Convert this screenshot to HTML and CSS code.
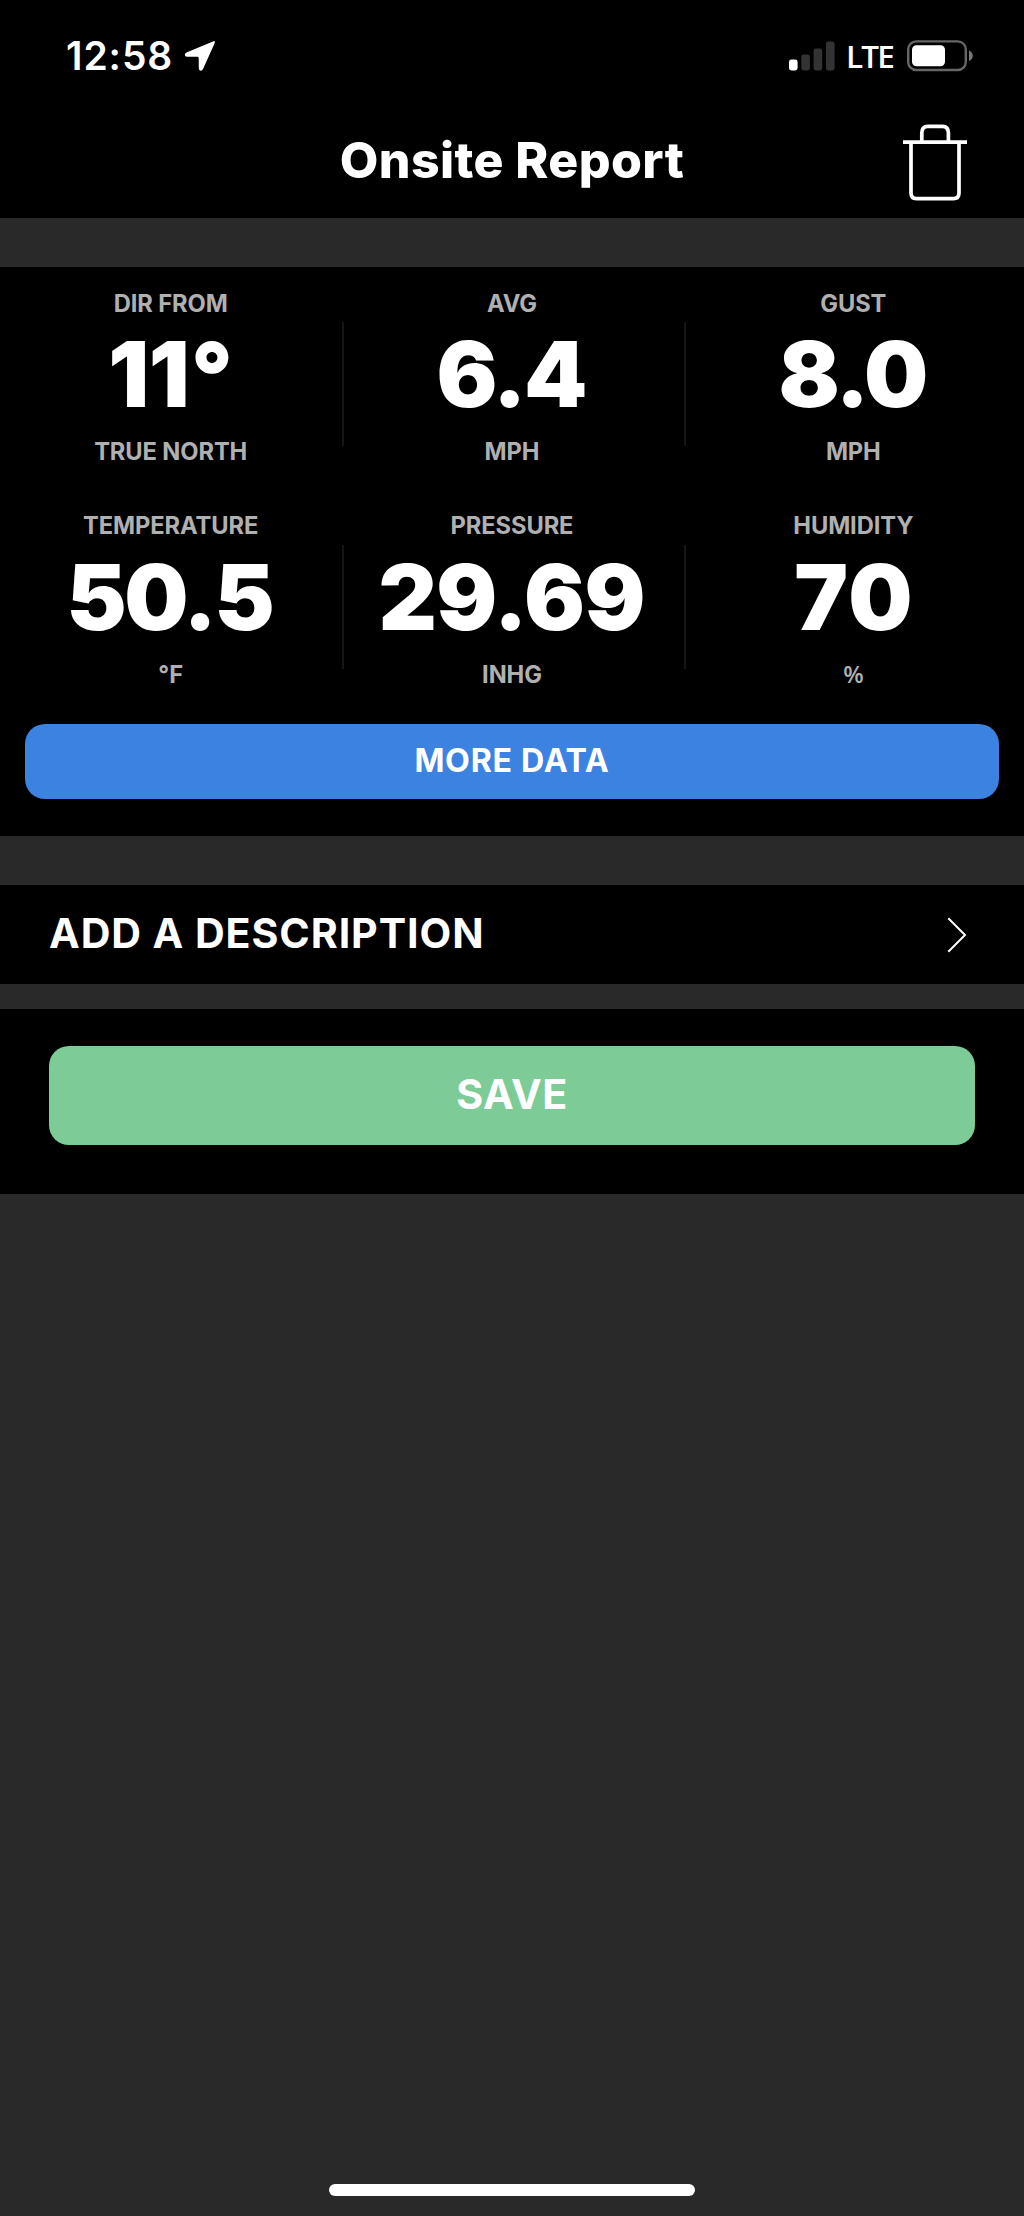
FILE: index.html
```html
<!DOCTYPE html>
<html lang="en">
<head>
<meta charset="utf-8">
<title>Onsite Report</title>
<link rel="stylesheet" href="styles.css">
</head>
<body>
<div class="screen">
  <header class="header">
    <div class="status">
      <div class="status-left">
        <span class="time">12:58</span>
        <svg class="location" width="32" height="32" viewBox="0 0 32 32"><path d="M29 1.6 3 12.3Q.6 13.3.8 14.8 1 16.6 3 16.7L13.6 16.8Q14.7 16.8 14.7 17.9L14.8 28.6Q14.9 30.6 16.6 30.8 18.2 31 19.3 28.6L30.6 3.2Q31.2 1.8 30.6 1.2 30 .8 29 1.6Z" fill="#fff"/></svg>
      </div>
      <div class="status-right">
        <svg class="signal" width="46" height="30" viewBox="0 0 46 30">
          <rect x="0" y="18.5" width="8.6" height="11" rx="2.4" fill="#fff"/>
          <rect x="12.3" y="13.5" width="8.6" height="16" rx="2.4" fill="#333"/>
          <rect x="24.6" y="7.5" width="8.6" height="22" rx="2.4" fill="#333"/>
          <rect x="37" y="0.5" width="8.6" height="29" rx="2.4" fill="#333"/>
        </svg>
        <span class="network">LTE</span>
        <svg class="battery" width="66" height="32" viewBox="0 0 66 32">
          <rect x="1.2" y="1.4" width="57.6" height="28.6" rx="8" fill="none" stroke="#666" stroke-width="2.4"/>
          <rect x="5" y="5.2" width="33" height="21" rx="4.5" fill="#fff"/>
          <path d="M62 10.4Q65.8 12.2 65.8 15.7T62 21Z" fill="#777"/>
        </svg>
      </div>
    </div>
    <div class="nav">
      <h1 class="title">Onsite Report</h1>
      <svg class="trash" width="64" height="78" viewBox="0 0 64 78" fill="none" stroke="#fff" stroke-width="3.7">
        <path d="M0 18.2H64"/>
        <path d="M18.8 18V9Q18.8 2.3 24.8 2.3H39.5Q45.4 2.3 45.4 9V18"/>
        <path d="M8 18V69Q8 74.6 13.5 74.6H50.5Q56 74.6 56 69V18"/>
      </svg>
    </div>
  </header>

  <section class="panel readings">
    <div class="grid">
      <div class="cell"><span class="label">DIR FROM</span><span class="value direction">11<span class="degree">°</span></span><span class="label unit">TRUE NORTH</span></div>
      <div class="cell"><span class="label">AVG</span><span class="value">6.4</span><span class="label unit">MPH</span></div>
      <div class="cell"><span class="label">GUST</span><span class="value">8.0</span><span class="label unit">MPH</span></div>
      <div class="cell"><span class="label">TEMPERATURE</span><span class="value">50.5</span><span class="label unit">°F</span></div>
      <div class="cell"><span class="label">PRESSURE</span><span class="value pressure">29.69</span><span class="label unit">INHG</span></div>
      <div class="cell"><span class="label">HUMIDITY</span><span class="value humidity">70</span><span class="label unit percent">%</span></div>
    </div>
    <button class="button more">MORE DATA</button>
  </section>

  <section class="panel description">
    <span class="description-text">ADD A DESCRIPTION</span>
    <svg class="chevron" width="20" height="36" viewBox="0 0 20 36"><path d="M1.3 1.2 18 18 1.3 34.8" fill="none" stroke="#fff" stroke-width="2"/></svg>
  </section>

  <section class="panel actions">
    <button class="button save">SAVE</button>
  </section>

  <div class="home-indicator"></div>
</div>
</body>
</html>
```
FILE: styles.css
```css
* { box-sizing: border-box; }

body {
  margin: 0;
  background: #292929;
  color: #fff;
  font-family: Inter, "Liberation Sans", sans-serif;
}

.screen {
  display: flex;
  flex-direction: column;
  width: 1024px;
  height: 2216px;
}

.header { height: 218px; background: #000; }

.status {
  display: flex;
  justify-content: space-between;
  align-items: center;
  height: 103px;
  padding: 9px 51px 0 66px;
}

.status-left, .status-right { display: flex; align-items: center; }

.time {
  font-size: 39px;
  font-weight: 570;
  line-height: 48px;
  letter-spacing: 0.9px;
}

.location { margin-left: 10.5px; }

.network {
  margin: 0 14px 0 11px;
  padding-bottom: 1px;
  font-family: "Open Sans", sans-serif;
  font-size: 31.5px;
  font-weight: 600;
  line-height: 40px;
  letter-spacing: -1.8px;
}

.nav {
  display: grid;
  grid-template-columns: 1fr auto 1fr;
  align-items: center;
  height: 115px;
  padding: 0 57px;
}

.title {
  grid-column: 2;
  margin: 0;
  padding-bottom: 2px;
  font-size: 50px;
  font-weight: 850;
  line-height: 60px;
  letter-spacing: 0.4px;
}

.trash { justify-self: end; margin-top: 5px; }

.panel { background: #000; }

.readings {
  height: 569px;
  margin-top: 49px;
  padding: 0 25px;
}

.grid {
  display: grid;
  grid-template-columns: repeat(3, 1fr);
  grid-auto-rows: 222.5px;
  margin: 0 -25px;
}

.cell {
  display: flex;
  flex-direction: column;
  align-items: center;
  padding-top: 21.5px;
}

.cell:not(:nth-child(3n + 1)) {
  background: linear-gradient(#151515, #151515) 1px 55px / 2px 124px no-repeat;
}

.label {
  color: #b0b0b0;
  font-size: 23.7px;
  font-weight: 700;
  line-height: 30px;
  letter-spacing: -0.1px;
}

.value {
  --spacing: -2.4px;
  margin: 15.5px calc(-1 * var(--spacing)) 0 0;
  font-size: 90.4px;
  font-weight: 900;
  line-height: 80px;
  letter-spacing: var(--spacing);
}

.direction { --spacing: -0.5px; }
.degree { margin-left: 2px; }
.pressure { --spacing: -0.6px; }
.humidity { --spacing: 1.6px; }

.unit { margin-top: 23px; }

.percent {
  margin-top: 22px;
  font-family: "Open Sans", sans-serif;
  font-weight: 600;
}

.button {
  display: block;
  width: 100%;
  border: 0;
  border-radius: 20px;
  color: #fff;
  font-family: inherit;
  font-weight: 700;
}

.more {
  height: 75px;
  margin-top: 12px;
  padding: 0 0 3px;
  background: #3c82e0;
  font-size: 32.2px;
  letter-spacing: 0.7px;
}

.description {
  display: flex;
  justify-content: space-between;
  align-items: center;
  height: 99px;
  margin-top: 49px;
  padding: 0 57px 0 49px;
}

.description-text {
  padding-bottom: 3px;
  font-size: 41.2px;
  font-weight: 720;
  line-height: 50px;
  letter-spacing: 0.9px;
}

.chevron { margin-top: 1px; }

.actions {
  height: 185px;
  margin-top: 25px;
  padding: 37px 49px 0;
}

.save {
  height: 99px;
  padding: 0 0 3px;
  background: #7dcb97;
  font-size: 41.2px;
  letter-spacing: 0.5px;
}

.home-indicator {
  align-self: center;
  width: 366px;
  height: 12px;
  margin: auto 0 20px;
  border-radius: 6px;
  background: #fff;
}
```
